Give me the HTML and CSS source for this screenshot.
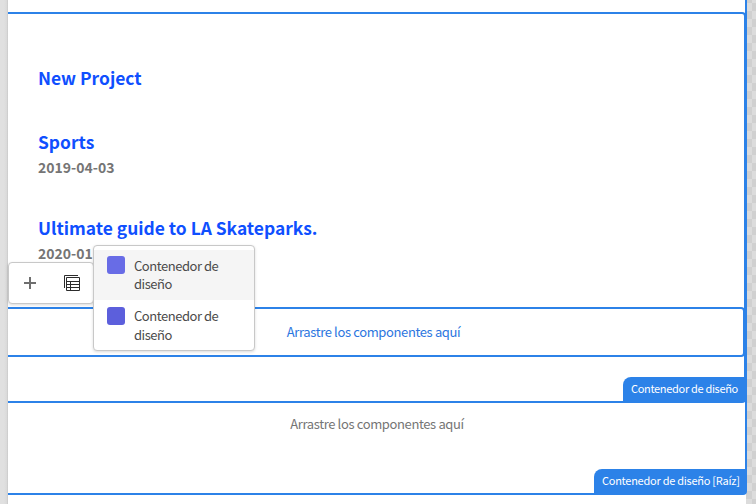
FILE: index.html
```html
<!DOCTYPE html>
<html lang="es">
<head>
<meta charset="utf-8">
<title>Editor de plantillas</title>
<link rel="stylesheet" href="styles.css">
</head>
<body>
<div class="editor">
  <main class="page">
    <section class="root">
      <section class="container">
        <div class="teasers">
          <h2 class="title solo">New Project</h2>
          <article class="teaser">
            <h2 class="title">Sports</h2>
            <p class="date">2019-04-03</p>
          </article>
          <article class="teaser">
            <h2 class="title">Ultimate guide to LA Skateparks.</h2>
            <p class="date">2020-01</p>
          </article>
        </div>
        <div class="dropzone"><span>Arrastre los componentes aquí</span></div>
        <span class="tag">Contenedor de diseño</span>
      </section>
      <div class="placeholder"><span>Arrastre los componentes aquí</span></div>
      <span class="tag tag-root">Contenedor de diseño [Raíz]</span>
    </section>
  </main>
  <div class="toolbar">
    <svg class="plus" viewBox="0 0 12 12"><path d="M6 0v12M0 6h12" stroke="#6e6e6e" stroke-width="2"/></svg>
    <svg class="table" viewBox="0 0 16 16" fill="none" stroke="#2c2c2c"><path d="M.5 13V.5H14M2.500 2.500h13v13h-13zM2.500 6.500h13M2.500 9.500h13M2.500 12.500h13M6.500 6.500v9"/></svg>
  </div>
  <ul class="menu">
    <li class="item active"><i class="swatch light"></i><span>Contenedor de diseño</span></li>
    <li class="item second"><i class="swatch"></i><span>Contenedor de diseño</span></li>
  </ul>
</div>
</body>
</html>
```
FILE: styles.css
```css
* { box-sizing: border-box; }

body {
  margin: 0;
  font-family: "Noto Sans CJK SC", "Open Sans", sans-serif;
  overflow: hidden;
}

.editor {
  position: relative;
  width: 756px;
  height: 504px;
  padding-left: 8px;
  overflow: hidden;
  background:
    linear-gradient(90deg, #e0e0e0 4px, #d9d9d9 7px, #c4c4c4 8px) 0 0 / 8px 100% no-repeat,
    conic-gradient(#dcdcdc 25%, #d0d0d0 0 50%, #dcdcdc 0 75%, #d0d0d0 0) 0 3px / 16px 16px;
}

.page {
  width: 738px;
  height: 504px;
  background: #fff;
}

.root {
  position: relative;
  width: 739px;
  height: 495px;
  padding-top: 12px;
  border: solid #2c82e8;
  border-width: 0 2px 2px 0;
  border-radius: 0 0 4px;
}

.container {
  position: relative;
  width: 738px;
  height: 391px;
  border: solid #2c82e8;
  border-width: 2px 2px 2px 0;
  border-radius: 0 4px 4px 0;
}

.teasers {
  height: 293px;
  padding: 50px 30px 0;
}

.title {
  margin: 0;
  font-size: 17.4px;
  line-height: 28px;
  font-weight: 700;
  color: #0f4fff;
}

.solo { margin-bottom: 36px; }

.teaser { height: 86px; }

.date {
  margin: 0;
  font-size: 14px;
  line-height: 23px;
  font-weight: 700;
  color: #757575;
}

.dropzone {
  width: 737px;
  height: 50px;
  border: solid #2c82e8;
  border-width: 2px 2px 2px 0;
  border-radius: 0 4px 4px 0;
  color: #2c76e0;
  padding-right: 4px;
}

.dropzone, .placeholder {
  display: flex;
  justify-content: center;
  align-items: center;
  font-size: 13px;
  letter-spacing: -.37px;
  line-height: 20px;
}

.placeholder {
  height: 42px;
  padding-left: 1px;
  color: #757575;
}

.tag {
  position: absolute;
  right: 0;
  bottom: 0;
  width: 121px;
  height: 24px;
  padding-left: 8px;
  border-radius: 8px 0 0;
  background: #2c82e8;
  color: #fff;
  font-size: 11px;
  letter-spacing: -.32px;
  line-height: 22px;
  white-space: nowrap;
}

.tag-root {
  width: 151px;
  letter-spacing: -.26px;
}

.toolbar {
  position: absolute;
  left: 8px;
  top: 262px;
  width: 86px;
  height: 42px;
  display: flex;
  align-items: center;
  gap: 28px;
  padding-left: 15px;
  background: #fff;
  border: 1px solid #c8c8c8;
  border-radius: 4px;
  box-shadow: 0 1px 3px rgba(0, 0, 0, .15);
}

.plus { width: 12px; height: 12px; }
.table { width: 16px; height: 16px; }

.menu {
  position: absolute;
  left: 93px;
  top: 245px;
  width: 162px;
  height: 106px;
  margin: 0;
  padding: 4px 0;
  list-style: none;
  background: #fff;
  border: 1px solid #c8c8c8;
  border-radius: 4px;
  box-shadow: 0 1px 3px rgba(0, 0, 0, .15);
}

.item {
  display: flex;
  gap: 9px;
  height: 50px;
  padding: 7px 25px 0 13px;
  color: #4b4b4b;
  font-size: 13px;
  letter-spacing: -.46px;
  line-height: 18px;
}

.active { background: #f5f5f5; }

.swatch {
  flex: none;
  width: 18px;
  height: 18px;
  margin-top: -1px;
  border-radius: 3px;
  background: #5c5fdc;
}

.light { background: #686ce6; }

.second {
  padding-top: 6px;
  line-height: 19px;
}

.second .swatch { margin-top: 1px; }
```
